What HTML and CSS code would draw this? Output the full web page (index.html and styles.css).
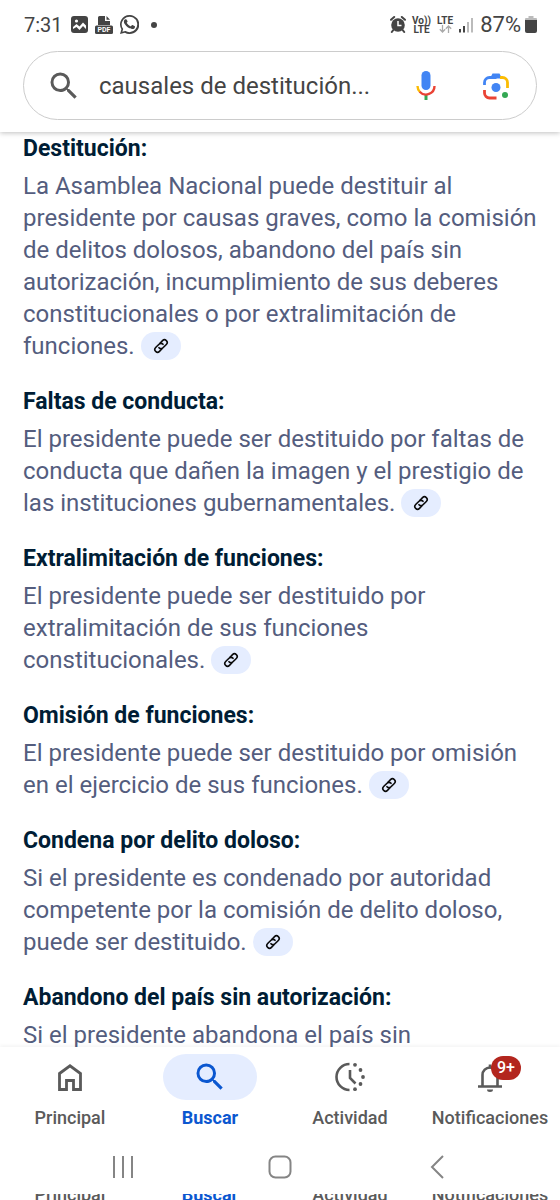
FILE: index.html
```
<!DOCTYPE html>
<html lang="es">
<head>
    <meta charset="UTF-8">
    <meta name="viewport" content="width=device-width, initial-scale=1.0">
    <title>causales de destitución</title>
    <link rel="stylesheet" href="styles.css">
</head>
<body>

    <svg class="symbols" aria-hidden="true">
        <symbol id="link" viewBox="0 0 24 24">
            <g fill="none" stroke="currentColor" stroke-width="2.400" stroke-linecap="round" stroke-linejoin="round">
                <path d="M9 14.500a4 4 0 0 0 6 .2l5-5a4 4 0 0 0-5.700-5.700l-3.800 3.800"/>
                <path d="M15 9.500a4 4 0 0 0-6-.2l-5 5a4 4 0 0 0 5.700 5.700l3.800-3.800"/>
            </g>
        </symbol>
        <symbol id="search" viewBox="0 0 24 24">
            <path fill="currentColor" d="M15.500 14h-.79l-.28-.27A6.470 6.470 0 0 0 16 9.500 6.500 6.500 0 1 0 9.500 16c1.610 0 3.090-.59 4.230-1.570l.27.28v.79l5 4.990L20.490 19l-4.990-5zm-6 0C7.010 14 5 11.990 5 9.500S7.010 5 9.500 5 14 7.010 14 9.500 11.990 14 9.500 14z"/>
        </symbol>
    </svg>

    <header class="top">
        <div class="status">
            <span class="time">7:31</span>
            <svg width="17" height="17" viewBox="0 0 17 17">
                <rect width="17" height="17" rx="3" fill="#444"/>
                <circle cx="5.500" cy="5" r="1.600" fill="#fff"/>
                <path d="M2 13V11l3.500-3 3 2.500L12 6.500l3 3V13l-3-3-3.500 4-3-3z" fill="#fff"/>
            </svg>
            <svg class="pdf" width="18" height="18" viewBox="0 0 18 18">
                <path d="M3 1.500Q3 0 4.500 0H10v5h5v4H3z" fill="#444"/>
                <path d="M11.500 0L15 3.700h-3.500z" fill="#444"/>
                <rect y="9.500" width="18" height="8.500" rx="1.500" fill="#444"/>
                <text x="9" y="16" text-anchor="middle" fill="#fff">PDF</text>
            </svg>
            <svg width="19" height="19" viewBox="0 0 24 24" fill="#444">
                <path d="M12 0A11.900 11.900 0 0 0 1.800 18L0 24l6.200-1.700A12 12 0 1 0 12 0zm0 21.700a9.800 9.800 0 0 1-5-1.400l-.4-.2-3.600 1 1-3.500-.3-.4A9.800 9.800 0 1 1 12 21.700z"/>
                <path d="M8.200 5.800c-.3-.5-.5-.5-.9-.5-.4 0-.8.100-1.200.500-.4.500-1.200 1.200-1.200 2.700 0 1.600 1.200 3.100 1.300 3.300.2.200 2.400 3.700 5.900 5 3 1.200 3.500.9 4.200.9.700-.1 2.100-.9 2.400-1.700.3-.8.300-1.500.2-1.700l-.7-.5-2.400-1.100c-.3-.1-.6-.2-.9.2l-1 1.200c-.2.300-.5.300-.8.100-2-.9-3.700-2.600-4.500-4-.2-.4 0-.6.200-.8.500-.6.900-1 .8-1.400z"/>
            </svg>
            <span class="more"></span>

            <div class="signals">
                <svg width="16" height="17" viewBox="0 0 16 17">
                    <circle cx="8" cy="9" r="6.800" fill="#444"/>
                    <path d="M1 3.800L4.200 1M15 3.800L11.800 1M3.200 14.200L1.800 16M12.800 14.200L14.200 16" stroke="#444" stroke-width="2" stroke-linecap="round"/>
                    <path d="M8 5v4.500h3.500" fill="none" stroke="#fff" stroke-width="1.500"/>
                </svg>
                <span class="net"><b>Vo))</b><b>LTE</b></span>
                <span class="net"><b>LTE</b>
                    <svg width="13" height="8" viewBox="0 0 13 8" fill="none" stroke="#aaa" stroke-width="1.300">
                        <path d="M3.500 0v7M.8 4.300L3.500 7l2.700-2.700M9.500 8V1M6.800 3.700L9.500 1l2.700 2.700"/>
                    </svg>
                </span>
                <svg width="15" height="16" viewBox="0 0 15 16">
                    <path fill="#444" d="M0 12h2v3.500H0zM4 9h2v6.500H4z"/>
                    <path fill="#bbb" d="M8 5h2v10.500H8zM12 1h2v14.500h-2z"/>
                </svg>
                <span class="percent">87%</span>
                <svg width="12" height="17" viewBox="0 0 12 17">
                    <path fill="#bbb" d="M3.500 0h5v2H11q1 0 1 1v3H0V3q0-1 1-1h2.500z"/>
                    <path fill="#444" d="M0 4h12v11q0 2-2 2H2q-2 0-2-2z"/>
                </svg>
            </div>
        </div>

        <form class="search-box">
            <svg class="lens" width="36" height="36"><use href="#search"/></svg>
            <input type="text" value="causales de destitución..." aria-label="Buscar">
            <button type="button" aria-label="Búsqueda por voz">
                <svg width="20" height="30" viewBox="0 0 20 30" fill="none">
                    <rect x="5.500" y="0" width="9" height="19" rx="4.500" fill="#4285f4"/>
                    <path d="M10 24V29" stroke="#34a853" stroke-width="3"/>
                    <path d="M1.500 15A8.500 8.500 0 0 0 4 21" stroke="#fbbc04" stroke-width="2.400"/>
                    <path d="M3.700 20.700A8.500 8.500 0 0 0 18.500 15" stroke="#ea4335" stroke-width="2.400"/>
                </svg>
            </button>
            <button type="button" aria-label="Buscar con imagen">
                <svg width="28" height="28" viewBox="0 0 28 28" fill="none">
                    <path d="M2.500 13v-2.500a5 5 0 0 1 5-5h7" stroke="#4285f4" stroke-width="2.800"/>
                    <path d="M8 6.500L10.500 1.500h7L20 6.500z" fill="#4285f4"/>
                    <path d="M18 5.500h2.500a5 5 0 0 1 5 5V16" stroke="#fbbc04" stroke-width="2.800"/>
                    <path d="M2.500 18V21a5 5 0 0 0 5 5h7" stroke="#ea4335" stroke-width="2.800"/>
                    <circle cx="14" cy="15.500" r="4.500" fill="#4285f4"/>
                    <circle cx="23" cy="23" r="3" fill="#34a853"/>
                </svg>
            </button>
        </form>
    </header>

    <main class="results">
        <h2>Destitución:</h2>
        <p>La Asamblea Nacional puede destituir al<br> presidente por causas graves, como la comisión<br> de delitos dolosos, abandono del país sin<br> autorización, incumplimiento de sus deberes<br> constitucionales o por extralimitación de<br> funciones. <button class="source" aria-label="Fuente"><svg width="16" height="16"><use href="#link"/></svg></button></p>

        <h2>Faltas de conducta:</h2>
        <p>El presidente puede ser destituido por faltas de<br> conducta que dañen la imagen y el prestigio de<br> las instituciones gubernamentales. <button class="source" aria-label="Fuente"><svg width="16" height="16"><use href="#link"/></svg></button></p>

        <h2>Extralimitación de funciones:</h2>
        <p>El presidente puede ser destituido por<br> extralimitación de sus funciones<br> constitucionales. <button class="source" aria-label="Fuente"><svg width="16" height="16"><use href="#link"/></svg></button></p>

        <h2>Omisión de funciones:</h2>
        <p>El presidente puede ser destituido por omisión<br> en el ejercicio de sus funciones. <button class="source" aria-label="Fuente"><svg width="16" height="16"><use href="#link"/></svg></button></p>

        <h2>Condena por delito doloso:</h2>
        <p>Si el presidente es condenado por autoridad<br> competente por la comisión de delito doloso,<br> puede ser destituido. <button class="source" aria-label="Fuente"><svg width="16" height="16"><use href="#link"/></svg></button></p>

        <h2>Abandono del país sin autorización:</h2>
        <p>Si el presidente abandona el país sin</p>
    </main>

    <nav class="tabs">
        <a href="#">
            <span class="icon">
                <svg width="24" height="27" viewBox="0 0 24 27" fill="none" stroke="currentColor" stroke-width="2.800">
                    <path d="M1.500 9.500L12 1.800l10.500 7.700v16H15.500v-9h-7v9h-7z"/>
                </svg>
            </span>
            <span>Principal</span>
        </a>
        <a href="#" class="active">
            <span class="icon"><svg width="36" height="36"><use href="#search"/></svg></span>
            <span>Buscar</span>
        </a>
        <a href="#">
            <span class="icon">
                <svg width="30" height="30" viewBox="0 0 30 30" fill="currentColor">
                    <path d="M14.500 2a13 13 0 0 0 0 26" fill="none" stroke="currentColor" stroke-width="2.600"/>
                    <path d="M15 8v8l5.500 5.500" fill="none" stroke="currentColor" stroke-width="2.600"/>
                    <circle cx="20" cy="2.800" r="1.900"/>
                    <circle cx="25.500" cy="8" r="1.900"/>
                    <circle cx="28" cy="15" r="1.900"/>
                    <circle cx="25.500" cy="22" r="1.900"/>
                    <circle cx="20" cy="27.200" r="1.900"/>
                </svg>
            </span>
            <span>Actividad</span>
        </a>
        <a href="#">
            <span class="icon">
                <svg width="24" height="30" viewBox="0 0 24 30" fill="none" stroke="currentColor" stroke-width="2.600">
                    <path d="M0 24.500h24M4.500 24.500V13a7.500 7.500 0 0 1 15 0v11.500"/>
                    <path d="M9 27.500h6a3 2.500 0 0 1-6 0z" fill="currentColor" stroke="none"/>
                    <path d="M12 2.500v4"/>
                </svg>
                <span class="badge">9+</span>
            </span>
            <span>Notificaciones</span>
        </a>
    </nav>

    <div class="system">
        <button aria-label="Recientes">
            <svg width="22" height="22" viewBox="0 0 22 22" stroke="#858585" stroke-width="2"><path d="M2 0v22M11 0v22M20 0v22"/></svg>
        </button>
        <button aria-label="Inicio">
            <svg width="24" height="24" viewBox="0 0 24 24" fill="none" stroke="#858585" stroke-width="2"><rect x="1.500" y="1.500" width="21" height="21" rx="6"/></svg>
        </button>
        <button aria-label="Atrás">
            <svg width="14" height="24" viewBox="0 0 14 24" fill="none" stroke="#858585" stroke-width="2"><path d="M13 1L2 12l11 11"/></svg>
        </button>
    </div>

    <!-- lower half of the tab labels, repeated under the system bar -->
    <div class="peek" aria-hidden="true">
        <span>Principal</span>
        <span class="active">Buscar</span>
        <span>Actividad</span>
        <span>Notificaciones</span>
    </div>

</body>
</html>
```
FILE: styles.css
```
* {
    box-sizing: border-box;
    margin: 0;
    padding: 0;
}

body {
    font-family: Roboto, Arial, sans-serif;
    background-color: #fff;
    color: #444;
    display: flex;
    flex-direction: column;
    height: 100vh;
    overflow: hidden;
}

button {
    background: none;
    border: none;
    cursor: pointer;
}

svg {
    display: block;
    flex: none;
}

.symbols {
    display: none;
}

.top {
    position: relative;
    background-color: #fff;
    padding: 0 23px 12px;
    box-shadow: 0 1px 5px rgba(0, 0, 0, 0.25);
}

.status {
    display: flex;
    align-items: center;
    gap: 7px;
    height: 51px;
    padding-bottom: 2px;
}

.time {
    font-size: 20px;
    padding: 0 1px;
}

.pdf text {
    font-size: 7px;
    font-weight: bold;
}

.more {
    width: 6px;
    height: 6px;
    margin-left: 5px;
    border-radius: 50%;
    background-color: #444;
}

.signals {
    display: flex;
    align-items: center;
    gap: 6px;
    margin-left: auto;
}

.percent {
    font-size: 22px;
    margin-right: -2px;
}

.net {
    display: flex;
    flex-direction: column;
    align-items: center;
    font-size: 10px;
    line-height: 9px;
}

.search-box {
    display: flex;
    align-items: center;
    height: 69px;
    padding: 0 26px 0 22px;
    border: 1px solid #ccc;
    border-radius: 35px;
}

.search-box .lens {
    color: #5a5a5a;
}

.search-box input {
    flex: 1;
    min-width: 0;
    margin-left: 17px;
    border: none;
    outline: none;
    background: none;
    font-family: inherit;
    font-size: 24px;
    color: #444;
}

.search-box button {
    margin-left: 46px;
}

.results {
    flex: 1;
    min-height: 0;
    overflow: hidden;
    padding: 1px 23px 0;
    font-size: 24px;
    line-height: 32px;
    color: #545d7e;
}

.results h2 {
    font-size: 23px;
    font-weight: 700;
    color: #001d35;
    margin-bottom: 5px;
}

.results p {
    margin-bottom: 24px;
}

.results h2,
.results p {
    white-space: nowrap;
}

.source {
    display: inline-flex;
    align-items: center;
    justify-content: center;
    width: 40px;
    height: 28px;
    border-radius: 14px;
    background-color: #e5edff;
    color: #0a0a0a;
    vertical-align: baseline;
}

.tabs,
.peek {
    display: grid;
    grid-template-columns: repeat(4, 1fr);
    font-size: 18px;
    font-weight: 500;
    color: #5a5a5a;
    text-align: center;
}

.tabs {
    height: 98px;
    padding-top: 7px;
    box-shadow: 0 -2px 3px rgba(0, 0, 0, 0.04);
}

.tabs a {
    display: flex;
    flex-direction: column;
    align-items: center;
    gap: 7px;
    color: inherit;
    text-decoration: none;
}

.icon {
    position: relative;
    display: flex;
    align-items: center;
    justify-content: center;
    width: 94px;
    height: 46px;
    border-radius: 23px;
}

.tabs .active,
.peek .active {
    color: #0b57d0;
    font-weight: 700;
}

.active .icon {
    background-color: #e5edff;
}

.badge {
    position: absolute;
    top: 2px;
    left: 48px;
    width: 30px;
    border-radius: 12px;
    background-color: #b3261e;
    color: #fff;
    font-size: 16px;
    line-height: 24px;
}

.system {
    display: grid;
    grid-template-columns: repeat(3, 1fr);
    place-items: center;
    height: 49px;
    padding: 0 44px 6px;
}

.peek {
    height: 6px;
    overflow: hidden;
    align-content: end;
    line-height: 10px;
}
```
